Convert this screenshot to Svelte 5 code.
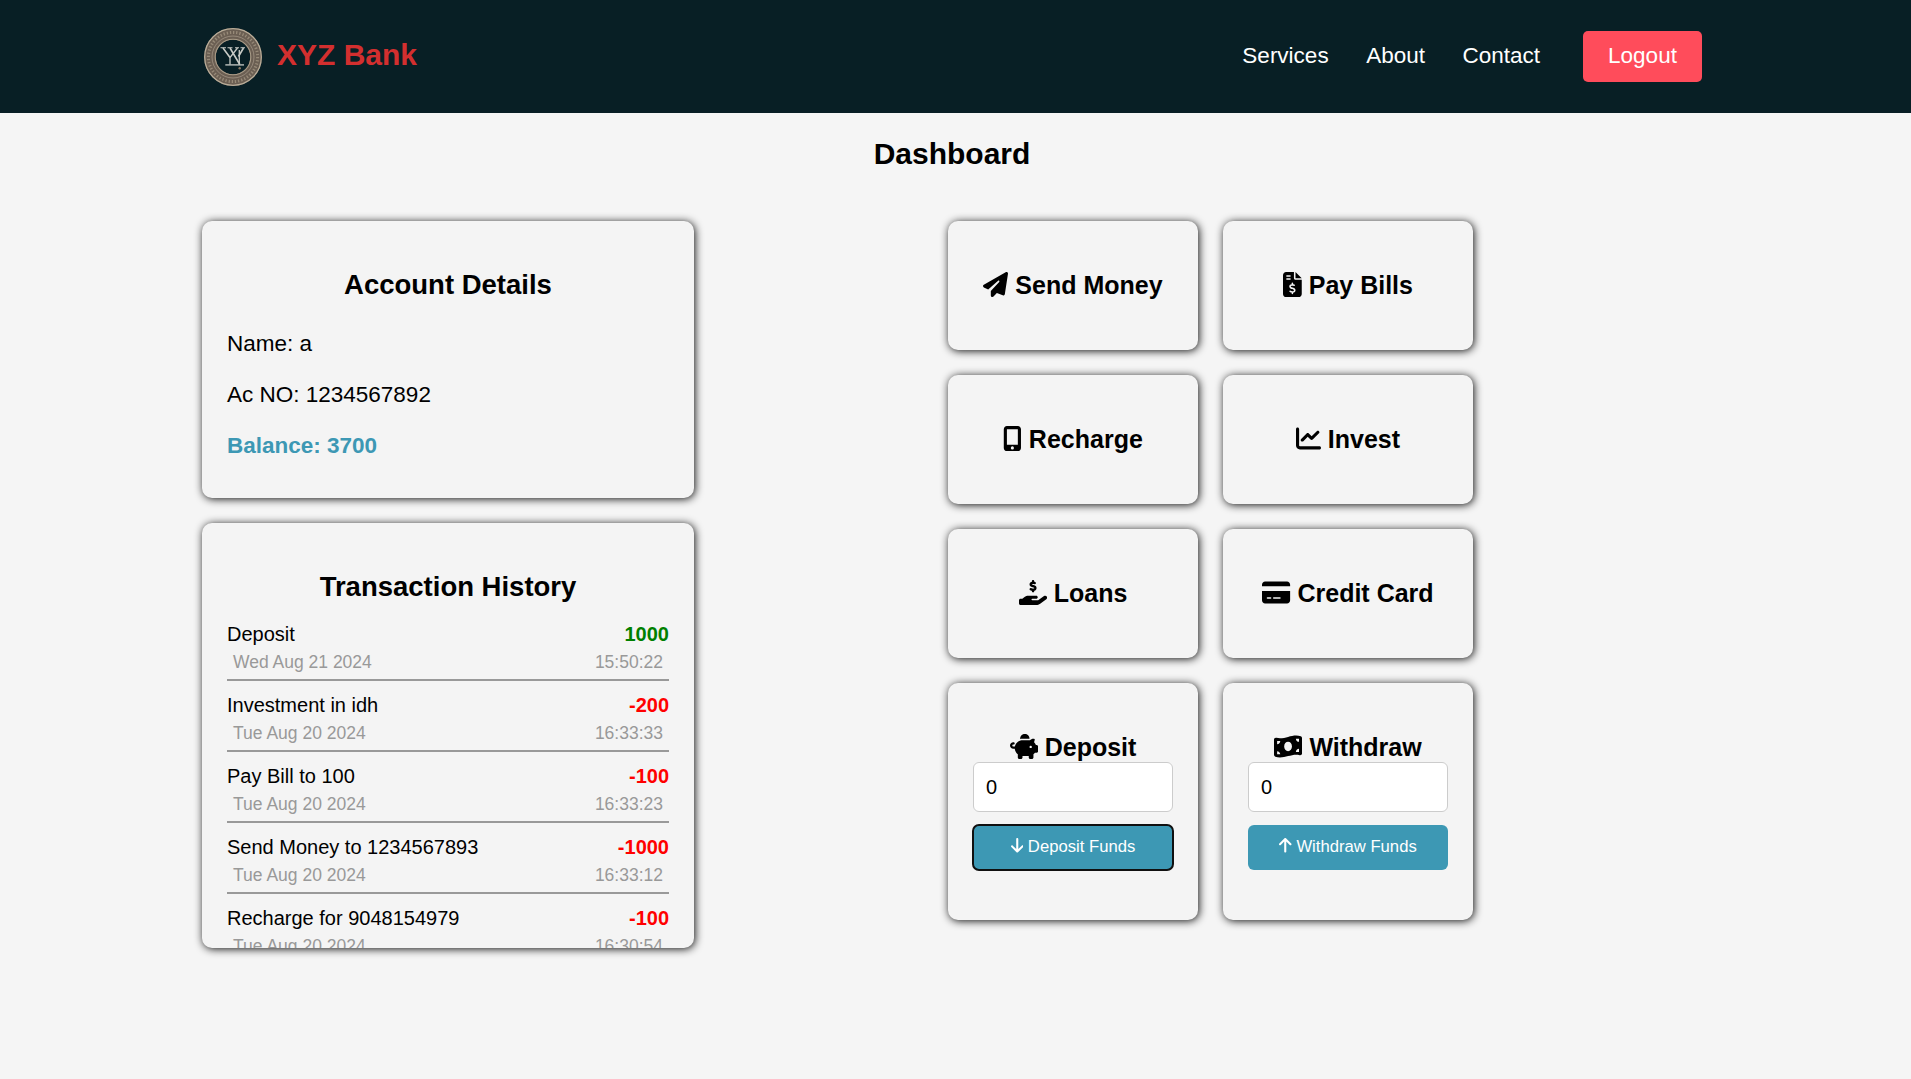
<script>
  const icons = {
    plane: [512, 'M498.1 5.6c10.1 7 15.4 19.1 13.5 31.2l-64 416c-1.5 9.7-7.4 18.2-16 23s-18.9 5.4-28 1.6L284 427.7l-68.5 74.1c-8.9 9.7-22.9 12.9-35.2 8.1S160 493.2 160 480V396.4c0-4 1.5-7.8 4.2-10.7L331.8 202.8c5.8-6.3 5.6-16-.4-22s-15.7-6.4-22-.7L106 360.8 17.7 316.6C7.1 311.3 .3 300.7 0 288.9s5.9-22.8 16.1-28.7l448-256c10.7-6.1 23.9-5.5 34 1.4z'],
    invoice: [384, 'M64 0C28.7 0 0 28.7 0 64V448c0 35.3 28.7 64 64 64H320c35.3 0 64-28.7 64-64V160H256c-17.7 0-32-14.3-32-32V0H64zM256 0V128H384L256 0zM64 80c0-8.8 7.2-16 16-16h64c8.8 0 16 7.2 16 16s-7.2 16-16 16H80c-8.8 0-16-7.2-16-16zm0 64c0-8.8 7.2-16 16-16h64c8.8 0 16 7.2 16 16s-7.2 16-16 16H80c-8.8 0-16-7.2-16-16zm128 72c8.8 0 16 7.2 16 16v17.3c8.5 1.2 16.7 3.1 24.1 5.1c8.5 2.3 13.6 11 11.3 19.6s-11 13.6-19.6 11.3c-11.1-3-22-5.2-32.1-5.3c-8.4-.1-17.4 1.8-23.6 5.5c-5.7 3.4-8.1 7.3-8.1 12.8c0 3.7 1.3 6.5 7.3 10.1c6.9 4.1 16.6 7.1 29.2 10.9l.5 .1c11.3 3.4 25.3 7.6 36.3 14.6c12.1 7.6 22.4 19.7 22.7 38.2c.3 19.3-9.6 33.3-22.9 41.6c-7.7 4.8-16.4 7.6-25.1 9.1V440c0 8.8-7.2 16-16 16s-16-7.2-16-16V422.2c-11.2-2.1-21.7-5.7-30.9-8.9c-2.1-.7-4.2-1.4-6.2-2.1c-8.4-2.8-12.9-11.9-10.1-20.2s11.9-12.9 20.2-10.1c2.5 .8 4.8 1.6 7.1 2.4c13.6 4.6 24.6 8.4 36.3 8.7c9.1 .3 17.9-1.7 23.7-5.3c5.1-3.2 7.9-7.3 7.8-14c-.1-4.6-1.8-7.8-7.7-11.6c-6.8-4.3-16.5-7.4-29-11.2l-1.6-.5c-11-3.3-24.3-7.3-34.8-13.7c-12-7.2-22.6-18.9-22.7-37.3c-.1-19.4 10.8-32.8 23.8-40.5c7.5-4.4 15.8-7.2 24.1-8.7V232c0-8.8 7.2-16 16-16z'],
    mobile: [384, 'M16 64C16 28.7 44.7 0 80 0H304c35.3 0 64 28.7 64 64V448c0 35.3-28.7 64-64 64H80c-35.3 0-64-28.7-64-64V64zM224 448a32 32 0 1 0 -64 0 32 32 0 1 0 64 0zM304 64H80V384H304V64z'],
    chart: [512, 'M64 64c0-17.7-14.3-32-32-32S0 46.3 0 64V400c0 44.2 35.8 80 80 80H480c17.7 0 32-14.3 32-32s-14.3-32-32-32H80c-8.8 0-16-7.2-16-16V64zm406.6 86.6c12.5-12.5 12.5-32.8 0-45.3s-32.8-12.5-45.3 0L320 210.7l-57.4-57.4c-12.5-12.5-32.8-12.5-45.3 0l-112 112c-12.5 12.5-12.5 32.8 0 45.3s32.8 12.5 45.3 0L240 221.3l57.4 57.4c12.5 12.5 32.8 12.5 45.3 0l128-128z'],
    hand: [576, 'M312 24V34.5c6.4 1.2 12.6 2.7 18.2 4.2c12.8 3.4 20.4 16.6 17 29.4s-16.6 20.4-29.4 17c-10.9-2.9-21.1-4.9-30.2-5c-7.3-.1-14.7 1.7-19.4 4.4c-2.1 1.3-3.1 2.4-3.5 3c-.3 .5-.7 1.2-.7 2.8c0 .3 0 .5 0 .6c.2 .2 .9 1.2 3.3 2.6c5.8 3.5 14.4 6.2 27.4 10.1l.9 .3c11.1 3.3 25.9 7.8 37.9 15.3c13.7 8.6 26.1 22.9 26.4 44.9c.3 22.5-11.4 38.9-26.7 48.5c-6.7 4.1-13.9 7-21.3 8.8V232c0 13.3-10.7 24-24 24s-24-10.7-24-24V220.6c-9.5-2.3-18.2-5.3-25.6-7.8c-2.1-.7-4.1-1.4-6-2c-12.6-4.2-19.4-17.8-15.2-30.4s17.8-19.4 30.4-15.2c2.6 .9 5 1.7 7.3 2.5c13.6 4.6 23.4 7.9 33.9 8.3c8 .3 15.1-1.6 19.2-4.1c1.9-1.2 2.8-2.2 3.2-2.9c.4-.6 .9-1.8 .8-4.1l0-.2c0-1 0-2.1-4-4.6c-5.7-3.6-14.3-6.4-27.1-10.3l-1.9-.6c-10.8-3.2-25-7.5-36.4-14.4c-13.5-8.1-26.5-22-26.6-44.1c-.1-22.9 12.9-38.6 27.7-47.4c6.4-3.8 13.3-6.4 20.2-8.2V24c0-13.3 10.7-24 24-24s24 10.7 24 24zM568.2 336.3c13.1 17.8 9.3 42.8-8.5 55.9L433.1 485.5c-23.4 17.2-51.6 26.5-80.7 26.5H192 32c-17.7 0-32-14.3-32-32V416c0-17.7 14.3-32 32-32H68.8l44.9-36c22.7-18.2 50.9-28 80-28H272h16 64c17.7 0 32 14.3 32 32s-14.3 32-32 32H288 272c-8.8 0-16 7.2-16 16s7.2 16 16 16H392.6l119.7-88.2c17.8-13.1 42.8-9.3 55.9 8.5z'],
    card: [576, 'M64 32C28.7 32 0 60.7 0 96v32H576V96c0-35.3-28.7-64-64-64H64zM576 224H0V416c0 35.3 28.7 64 64 64H512c35.3 0 64-28.7 64-64V224zM112 352h64c8.8 0 16 7.2 16 16s-7.2 16-16 16H112c-8.8 0-16-7.2-16-16s7.2-16 16-16zm112 16c0-8.8 7.2-16 16-16H368c8.8 0 16 7.2 16 16s-7.2 16-16 16H240c-8.8 0-16-7.2-16-16z'],
    piggy: [576, 'M400 96l0 .7c-5.3-.4-10.6-.7-16-.7H256c-16.5 0-32.5 2.1-47.8 6c-.1-2-.2-4-.2-6c0-53 43-96 96-96s96 43 96 96zm-16 32c3.5 0 7 .1 10.4 .3c4.2 .3 8.4 .7 12.6 1.3C424.6 109.1 450.8 96 480 96h11.5c10.4 0 18 9.8 15.5 19.9l-13.8 55.2c15.8 14.8 28.7 32.8 37.5 52.9H544c17.7 0 32 14.3 32 32v96c0 17.7-14.3 32-32 32H512c-9.1 12.1-19.9 22.9-32 32v64c0 17.7-14.3 32-32 32H416c-17.7 0-32-14.3-32-32V448H256v32c0 17.7-14.3 32-32 32H192c-17.7 0-32-14.3-32-32V416c-34.9-26.2-58.7-66.3-63.2-112H68c-37.6 0-68-30.4-68-68s30.4-68 68-68h4c13.3 0 24 10.7 24 24s-10.7 24-24 24H68c-11 0-20 9-20 20s9 20 20 20H99.2c12.1-59.8 57.7-107.5 116.3-122.8c12.9-3.4 26.5-5.2 40.5-5.2H384zm64 136a24 24 0 1 0 -48 0 24 24 0 1 0 48 0z'],
    bill: [576, 'M0 112.5V422.3c0 18 10.1 35 27 41.3c87 32.5 174 10.3 261-11.9c79.8-20.3 159.6-40.7 239.3-18.9c23 6.3 48.7-9.5 48.7-33.4V89.7c0-18-10.1-35-27-41.3C462 15.9 375 38.1 288 60.3C208.2 80.6 128.4 100.9 48.7 79.1C25.6 72.8 0 88.6 0 112.5zM288 352c-44.2 0-80-43-80-96s35.8-96 80-96s80 43 80 96s-35.8 96-80 96zM64 352c35.3 0 64 28.7 64 64H64V352zm64-208c0 35.3-28.7 64-64 64V144h64zM512 304v64H448c0-35.3 28.7-64 64-64zM448 96h64v64c-35.3 0-64-28.7-64-64z'],
    down: [384, 'M169.4 470.6c12.5 12.5 32.8 12.5 45.3 0l160-160c12.5-12.5 12.5-32.8 0-45.3s-32.8-12.5-45.3 0L224 370.8 224 64c0-17.7-14.3-32-32-32s-32 14.3-32 32l0 306.7L54.6 265.4c-12.5-12.5-32.8-12.5-45.3 0s-12.5 32.8 0 45.3l160 160z'],
    up: [384, 'M214.6 41.4c-12.5-12.5-32.8-12.5-45.3 0l-160 160c-12.5 12.5-12.5 32.8 0 45.3s32.8 12.5 45.3 0L160 141.2V448c0 17.7 14.3 32 32 32s32-14.3 32-32V141.2L329.4 246.6c12.5 12.5 32.8 12.5 45.3 0s12.5-32.8 0-45.3l-160-160z'],
  };

  const actions = [
    ['plane', 'Send Money'],
    ['invoice', 'Pay Bills'],
    ['mobile', 'Recharge'],
    ['chart', 'Invest'],
    ['hand', 'Loans'],
    ['card', 'Credit Card'],
  ];

  const transactions = [
    { label: 'Deposit', amount: 1000, date: 'Wed Aug 21 2024', time: '15:50:22' },
    { label: 'Investment in idh', amount: -200, date: 'Tue Aug 20 2024', time: '16:33:33' },
    { label: 'Pay Bill to 100', amount: -100, date: 'Tue Aug 20 2024', time: '16:33:23' },
    { label: 'Send Money to 1234567893', amount: -1000, date: 'Tue Aug 20 2024', time: '16:33:12' },
    { label: 'Recharge for 9048154979', amount: -100, date: 'Tue Aug 20 2024', time: '16:30:54' },
  ];

  let deposit = $state(0);
  let withdraw = $state(0);
</script>

{#snippet icon(name)}
  <svg class="icon" class:w384={icons[name][0] === 384} class:w576={icons[name][0] === 576} viewBox="0 0 {icons[name][0]} 512" aria-hidden="true"><path d={icons[name][1]} /></svg>
{/snippet}

<header>
  <div class="brand">
    <svg class="logo" viewBox="0 0 60 60" aria-hidden="true">
      <circle cx="30" cy="30" r="23" fill="none" stroke="#6b5f53" stroke-width="11.5" />
      <circle cx="30" cy="30" r="28.3" fill="none" stroke="#b9ac98" stroke-width="1.3" />
      <circle cx="30" cy="30" r="24.6" fill="none" stroke="#978a78" stroke-width="3" stroke-dasharray="1.3 1.9" />
      <circle cx="30" cy="30" r="21" fill="none" stroke="#96897a" stroke-width="1" />
      <circle cx="30" cy="30" r="17.8" fill="none" stroke="#a89b87" stroke-width="1.1" />
      <!-- interlaced strokes of the emblem over its base bar -->
      <g fill="none" stroke="#c9cbc6">
        <path d="M17.5 20.7H23M24.5 20.7H29.5M32 20.7H36M37.5 20.7H42" stroke-width="1.1" />
        <path d="M20 21L27 30.5M27 21L36.8 37.5M40.5 21L35.5 29.5" stroke-width="1.6" />
        <path d="M34.5 21L27 30.5V37.5M36.3 23V37.5" stroke-width="1.3" />
        <path d="M22.3 37.9H41" stroke-width="1.3" />
      </g>
      <circle cx="36.7" cy="41.2" r="1.2" fill="#8d7c66" />
    </svg>
    <span>XYZ Bank</span>
  </div>
  <nav>
    <a href="#services">Services</a>
    <a href="#about">About</a>
    <a href="#contact">Contact</a>
    <button class="logout">Logout</button>
  </nav>
</header>

<main>
  <h1>Dashboard</h1>
  <div class="columns">
    <div class="left">
      <section class="box account">
        <h2>Account Details</h2>
        <p>Name: a</p>
        <p>Ac NO: 1234567892</p>
        <p class="balance">Balance: 3700</p>
      </section>
      <section class="box history">
        <h2>Transaction History</h2>
        <ul>
          {#each transactions as t}
            <li>
              <div class="row">
                <span>{t.label}</span>
                <b class:credit={t.amount > 0}>{t.amount}</b>
              </div>
              <div class="row meta"><span>{t.date}</span><span>{t.time}</span></div>
            </li>
          {/each}
        </ul>
      </section>
    </div>
    <div class="grid">
      {#each actions as [name, label]}
        <section class="box tile"><h3>{@render icon(name)} {label}</h3></section>
      {/each}
      <section class="box tile form">
        <h3>{@render icon('piggy')} Deposit</h3>
        <input bind:value={deposit} aria-label="Deposit amount" />
        <button class="fund active">{@render icon('down')} Deposit Funds</button>
      </section>
      <section class="box tile form">
        <h3>{@render icon('bill')} Withdraw</h3>
        <input bind:value={withdraw} aria-label="Withdraw amount" />
        <button class="fund">{@render icon('up')} Withdraw Funds</button>
      </section>
    </div>
  </div>
</main>

<style>
  :global(body) {
    margin: 0;
    background: #f5f5f5;
    color: #000;
    font-family: 'Liberation Sans', Arial, sans-serif;
  }
  * {
    box-sizing: border-box;
  }
  header {
    height: 113px;
    padding: 0 209px 0 203px;
    display: flex;
    align-items: center;
    justify-content: space-between;
    background: #081f25;
  }
  .brand {
    display: flex;
    align-items: center;
    gap: 14px;
    color: #d32f2f;
    font-size: 30px;
    font-weight: bold;
    line-height: 34px;
  }
  .brand span {
    margin-bottom: 4px;
  }
  .logo {
    width: 60px;
    height: 60px;
  }
  nav {
    display: flex;
    align-items: center;
    font-size: 22.5px;
    line-height: 26px;
  }
  nav a {
    color: #fff;
    text-decoration: none;
    margin-right: 37.5px;
    margin-bottom: 2px;
  }
  nav a:nth-child(3) {
    margin-right: 43px;
  }
  button {
    border: 0;
    font-family: inherit;
    color: #fff;
  }
  .logout {
    width: 119px;
    height: 51px;
    padding: 0 0 2px;
    border-radius: 5px;
    background: #ff4c5b;
    font-size: 22.5px;
  }
  main {
    min-height: 966px;
    padding: 24px 202px 0;
  }
  h1 {
    margin: 0 0 50px;
    padding-right: 7px;
    text-align: center;
    font-size: 30px;
    line-height: 34px;
  }
  .columns {
    display: flex;
    align-items: flex-start;
    gap: 254px;
  }
  .left {
    width: 492px;
    display: grid;
    gap: 25px;
  }
  .box {
    padding: 25px;
    border-radius: 10px;
    background: #f4f4f4;
    box-shadow: 1px 1px 8px #111;
  }
  .account {
    height: 277px;
  }
  .history {
    height: 425px;
    overflow: hidden;
  }
  h2 {
    margin: 23px 0;
    text-align: center;
    font-size: 27.5px;
    line-height: 31px;
  }
  p {
    margin: 0 0 25px;
    font-size: 22.5px;
    line-height: 26px;
  }
  .account h2 {
    margin-bottom: 31px;
  }
  .balance {
    color: #3d98b4;
    font-weight: bold;
  }
  .history h2 {
    margin-bottom: 17px;
  }
  ul {
    list-style: none;
    margin: 0;
    padding: 0;
  }
  li {
    height: 62px;
    margin-bottom: 9px;
    border-bottom: 2px solid #999;
  }
  .row {
    display: flex;
    justify-content: space-between;
    font-size: 20px;
    line-height: 30px;
  }
  .row b {
    color: red;
  }
  .row b.credit {
    color: green;
  }
  .meta {
    padding: 0 6px;
    color: #999;
    font-size: 17.5px;
    line-height: 26px;
  }
  .grid {
    display: grid;
    grid-template-columns: 250px 250px;
    gap: 25px;
  }
  .tile {
    height: 129px;
  }
  h3 {
    margin: 25px 0 0;
    text-align: center;
    font-size: 25px;
    line-height: 29px;
    white-space: nowrap;
  }
  .icon {
    width: 1em;
    height: 1em;
    fill: currentColor;
    vertical-align: -0.125em;
  }
  .icon.w384 {
    width: 0.75em;
  }
  .icon.w576 {
    width: 1.125em;
  }
  .form {
    height: 237px;
  }
  input {
    display: block;
    width: 200px;
    height: 50px;
    margin: 0 0 13px;
    padding: 0 12px;
    border: 1px solid #ccc;
    border-radius: 6px;
    background: #fff;
    color: #000;
    font: 20px 'Liberation Sans', Arial, sans-serif;
  }
  .fund {
    display: block;
    width: 200px;
    height: 45px;
    padding: 0 0 1px;
    border-radius: 6px;
    background: #3d98b4;
    font-size: 16.67px;
  }
  .active {
    outline: 2px solid #101010;
    outline-offset: -1px;
  }
</style>
